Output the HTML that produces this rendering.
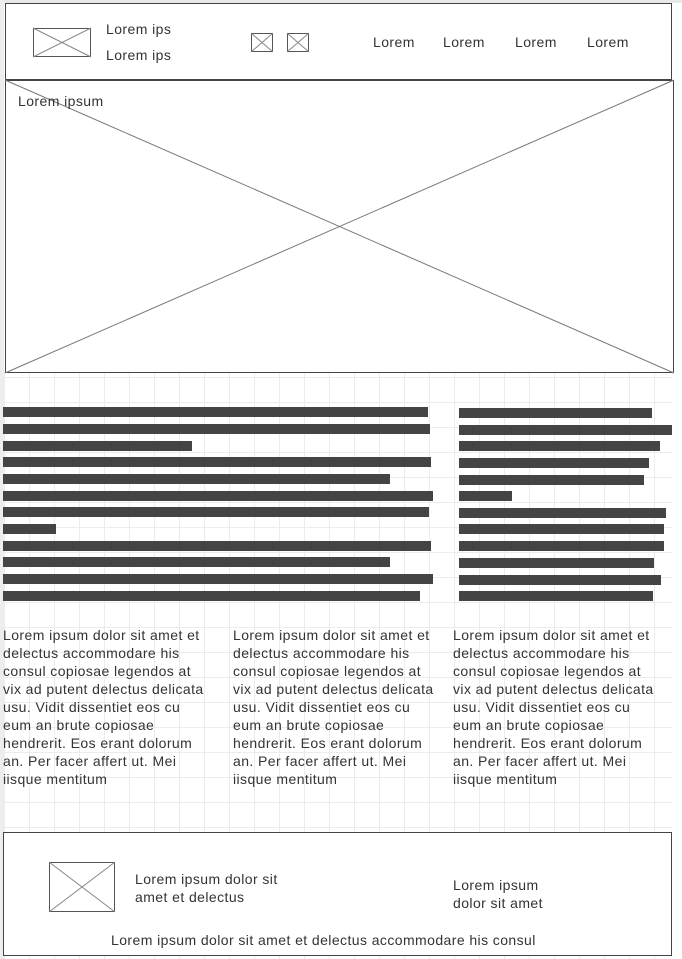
<!DOCTYPE html>
<html><head><meta charset="utf-8"><style>
*{margin:0;padding:0;box-sizing:border-box}
body{width:682px;height:959px;position:relative;overflow:hidden;background:#fff;font-family:"Liberation Sans",sans-serif;color:#333}
.a{position:absolute}
.grid{left:4px;top:372px;width:668px;height:587px;background-color:#fff;
background-image:linear-gradient(#ececec 1px,transparent 1px),linear-gradient(90deg,#ececec 1px,transparent 1px);
background-size:25px 25px;background-position:0 5px,0 0}
.box{border:1px solid #444;background:#fff}
.bar{position:absolute;height:10px;background:#444}
.t{position:absolute;font-size:14px;line-height:18px;white-space:nowrap;color:#333;letter-spacing:0.42px}
svg{position:absolute;overflow:visible}
</style></head><body>
<div class="a" style="left:0;top:0;width:682px;height:3px;background:#e8e8e8"></div>
<div class="a" style="left:0;top:0;width:4px;height:959px;background:#ededed"></div>
<div class="a grid"></div>

<div class="a box" style="left:5px;top:3px;width:667px;height:78px;border-width:1px 1px 2px 1px"></div>
<svg style="left:33px;top:28px" width="58" height="29"><rect x="0.5" y="0.5" width="57" height="28" fill="none" stroke="#555"/><path d="M0 0L58 29M58 0L0 29" stroke="#888"/></svg>
<div class="t" style="left:106px;top:20px">Lorem ips</div>
<div class="t" style="left:106px;top:46px">Lorem ips</div>
<svg style="left:251px;top:33px" width="22" height="19"><rect x="0.5" y="0.5" width="21" height="18" fill="none" stroke="#555"/><path d="M0 0L22 19M22 0L0 19" stroke="#888"/></svg>
<svg style="left:287px;top:33px" width="22" height="19"><rect x="0.5" y="0.5" width="21" height="18" fill="none" stroke="#555"/><path d="M0 0L22 19M22 0L0 19" stroke="#888"/></svg>
<div class="t" style="left:373px;top:33px">Lorem</div>
<div class="t" style="left:443px;top:33px">Lorem</div>
<div class="t" style="left:515px;top:33px">Lorem</div>
<div class="t" style="left:587px;top:33px">Lorem</div>

<svg style="left:5px;top:80px" width="669" height="293"><rect x="0.5" y="0.5" width="668" height="292" fill="#fff" stroke="#444"/><path d="M0 0L669 293M669 0L0 293" stroke="#777"/></svg>
<div class="t" style="left:18px;top:92px">Lorem ipsum</div>

<div class="bar" style="left:3px;top:407px;width:425px"></div>
<div class="bar" style="left:3px;top:424px;width:427px"></div>
<div class="bar" style="left:3px;top:441px;width:189px"></div>
<div class="bar" style="left:3px;top:457px;width:428px"></div>
<div class="bar" style="left:3px;top:474px;width:387px"></div>
<div class="bar" style="left:3px;top:491px;width:430px"></div>
<div class="bar" style="left:3px;top:507px;width:426px"></div>
<div class="bar" style="left:3px;top:524px;width:53px"></div>
<div class="bar" style="left:3px;top:541px;width:428px"></div>
<div class="bar" style="left:3px;top:557px;width:387px"></div>
<div class="bar" style="left:3px;top:574px;width:430px"></div>
<div class="bar" style="left:3px;top:591px;width:417px"></div>

<div class="bar" style="left:459px;top:408px;width:193px"></div>
<div class="bar" style="left:459px;top:425px;width:213px"></div>
<div class="bar" style="left:459px;top:441px;width:201px"></div>
<div class="bar" style="left:459px;top:458px;width:190px"></div>
<div class="bar" style="left:459px;top:475px;width:185px"></div>
<div class="bar" style="left:459px;top:491px;width:53px"></div>
<div class="bar" style="left:459px;top:508px;width:207px"></div>
<div class="bar" style="left:459px;top:524px;width:205px"></div>
<div class="bar" style="left:459px;top:541px;width:205px"></div>
<div class="bar" style="left:459px;top:558px;width:195px"></div>
<div class="bar" style="left:459px;top:575px;width:202px"></div>
<div class="bar" style="left:459px;top:591px;width:194px"></div>

<div class="t" style="left:3px;top:626px">Lorem ipsum dolor sit amet et<br>delectus accommodare his<br>consul copiosae legendos at<br>vix ad putent delectus delicata<br>usu. Vidit dissentiet eos cu<br>eum an brute copiosae<br>hendrerit. Eos erant dolorum<br>an. Per facer affert ut. Mei<br>iisque mentitum</div>
<div class="t" style="left:233px;top:626px">Lorem ipsum dolor sit amet et<br>delectus accommodare his<br>consul copiosae legendos at<br>vix ad putent delectus delicata<br>usu. Vidit dissentiet eos cu<br>eum an brute copiosae<br>hendrerit. Eos erant dolorum<br>an. Per facer affert ut. Mei<br>iisque mentitum</div>
<div class="t" style="left:453px;top:626px">Lorem ipsum dolor sit amet et<br>delectus accommodare his<br>consul copiosae legendos at<br>vix ad putent delectus delicata<br>usu. Vidit dissentiet eos cu<br>eum an brute copiosae<br>hendrerit. Eos erant dolorum<br>an. Per facer affert ut. Mei<br>iisque mentitum</div>

<div class="a box" style="left:3px;top:832px;width:669px;height:124px"></div>
<svg style="left:49px;top:862px" width="66" height="50"><rect x="0.5" y="0.5" width="65" height="49" fill="none" stroke="#555"/><path d="M0 0L66 50M66 0L0 50" stroke="#888"/></svg>
<div class="t" style="left:135px;top:870px">Lorem ipsum dolor sit<br>amet et delectus</div>
<div class="t" style="left:453px;top:876px">Lorem ipsum<br>dolor sit amet</div>
<div class="t" style="left:111px;top:931px">Lorem ipsum dolor sit amet et delectus accommodare his consul</div>
</body></html>
